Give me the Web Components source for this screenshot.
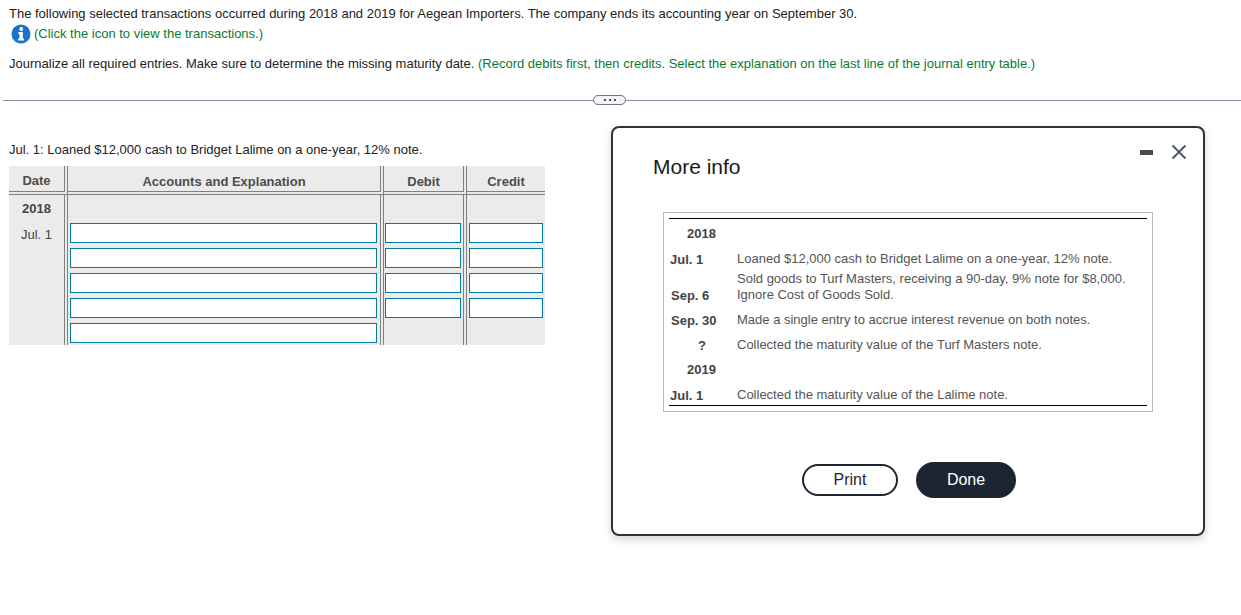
<!DOCTYPE html>
<html>
<head>
<meta charset="utf-8">
<title>Journal entry</title>
<style>
  html, body { margin: 0; height: 100%; background: #fff; }
  body { font: 13px "Liberation Sans", Arial, sans-serif; color: #222; overflow: hidden; }
</style>
</head>
<body>
<question-text></question-text>
<pane-divider></pane-divider>
<journal-table></journal-table>
<more-info-dialog></more-info-dialog>

<script>
class QuestionText extends HTMLElement {
  constructor() {
    super();
    this.attachShadow({ mode: 'open' });
    this.shadowRoot.innerHTML = `
      <style>
        :host { display: block; padding: 6px 0 0 9px; font-size: 13px; line-height: 16px; color: #222; }
        .hint { color: #0a7a2f; }
        .icon-line { display: flex; align-items: center; gap: 3px; margin: 2px 0 0 2px; height: 19px; }
        .task { margin-top: 13px; }
        svg { display: block; flex: none; }
      </style>
      <div class="intro">The following selected transactions occurred during 2018 and 2019 for Aegean Importers. The company ends its accounting year on September 30.</div>
      <div class="icon-line">
        <svg width="20" height="20" viewBox="0 0 20 20">
          <circle cx="10" cy="10" r="9.5" fill="#1a73c9"/>
          <circle cx="10.2" cy="5" r="1.9" fill="#fff"/>
          <path d="M7.4 8h4.4v6.6h1.2v1.9H7.2v-1.9h1.3V9.9H7.4z" fill="#fff"/>
        </svg>
        <span class="hint">(Click the icon to view the transactions.)</span>
      </div>
      <div class="task">Journalize all required entries. Make sure to determine the missing maturity date. <span class="hint">(Record debits first, then credits. Select the explanation on the last line of the journal entry table.)</span></div>
    `;
  }
}

class PaneDivider extends HTMLElement {
  constructor() {
    super();
    this.attachShadow({ mode: 'open' });
    this.shadowRoot.innerHTML = `
      <style>
        :host { display: block; position: relative; height: 1px; margin: 28px 0 0 3px; background: #8a8fa3; }
        .grip {
          position: absolute; left: 590px; top: -5px; width: 33px; height: 10px; box-sizing: border-box;
          border: 1px solid #6d7486; border-radius: 5px; background: #f2f4f7;
          display: flex; align-items: center; justify-content: center; gap: 3px;
        }
        .grip i { width: 2px; height: 2px; background: #4a5060; }
      </style>
      <div class="grip"><i></i><i></i><i></i></div>
    `;
  }
}

class JournalTable extends HTMLElement {
  constructor() {
    super();
    this.attachShadow({ mode: 'open' });

    // rows of the table: date label, then which inputs the row has
    const rows = [
      { date: 'Jul. 1', money: true },
      { date: '', money: true },
      { date: '', money: true },
      { date: '', money: true },
      { date: '', money: false }
    ];
    const body = rows.map((r) => `
      <div class="cell date">${r.date}</div>
      <div class="cell acct"><input type="text"></div>
      <div class="cell num">${r.money ? '<input type="text">' : ''}</div>
      <div class="cell num last">${r.money ? '<input type="text">' : ''}</div>
    `).join('');

    this.shadowRoot.innerHTML = `
      <style>
        :host { display: block; margin: 41px 0 0 9px; width: 536px; color: #444; }
        .prompt { line-height: 16px; color: #222; margin-bottom: 8px; }
        .grid {
          display: grid; grid-template-columns: 59px 316px 83px 78px;
          grid-template-rows: 29px 25px repeat(5, 25px); background: #ebebeb;
        }
        .cell { box-sizing: border-box; border-right: 4px double #808080; }
        .cell.last { border-right: 0; }
        .head {
          border-bottom: 4px double #808080; font-weight: bold; text-align: center;
          line-height: 31px; color: #4d4d4d;
        }
        .head.first { line-height: 29px; }
        .year { font-weight: bold; line-height: 28px; text-align: center; }
        .date { text-align: center; line-height: 30px; }
        .year.date { line-height: 28px; }
        .acct input { width: 307px; margin-left: 2px; }
        .num input { width: 76px; margin-left: 1px; }
        .last input { width: 74px; margin-left: 2px; }
        input {
          display: block; box-sizing: border-box; height: 20px; margin: 3px 0 0; padding: 0;
          border: 1px solid #007a9e; border-radius: 0; background: #fff; outline: 0;
        }
      </style>
      <div class="prompt">Jul. 1: Loaned $12,000 cash to Bridget Lalime on a one-year, 12% note.</div>
      <div class="grid">
        <div class="cell head first">Date</div>
        <div class="cell head">Accounts and Explanation</div>
        <div class="cell head">Debit</div>
        <div class="cell head last">Credit</div>
        <div class="cell year date">2018</div>
        <div class="cell"></div>
        <div class="cell"></div>
        <div class="cell last"></div>
        ${body}
      </div>
    `;
  }
}

class InfoRow extends HTMLElement {
  constructor() {
    super();
    this.attachShadow({ mode: 'open' });
    this.shadowRoot.innerHTML = `
      <style>
        :host { display: grid; grid-template-columns: 67px 1fr; align-items: end; padding: 0 0 4px; line-height: 16px; }
        .when { font-weight: bold; color: #444; margin-bottom: -1px; }
        .what { color: #555; }
      </style>
      <div class="when"><slot name="when"></slot></div>
      <div class="what"><slot></slot></div>
    `;
  }
}

class PillButton extends HTMLElement {
  constructor() {
    super();
    this.attachShadow({ mode: 'open' });
    this.shadowRoot.innerHTML = `
      <style>
        :host {
          display: flex; align-items: center; justify-content: center; box-sizing: border-box;
          width: 96px; height: 32px; border: 2px solid #1e2532; border-radius: 16px;
          font-size: 16px; color: #1e2532; background: #fff;
        }
        :host([primary]) { width: 100px; height: 36px; border-radius: 18px; background: #1e2532; color: #fff; }
      </style>
      <slot></slot>
    `;
  }
}

class MoreInfoDialog extends HTMLElement {
  constructor() {
    super();
    this.attachShadow({ mode: 'open' });
    this.shadowRoot.innerHTML = `
      <style>
        :host {
          position: absolute; left: 611px; top: 126px; width: 594px; height: 410px; box-sizing: border-box;
          display: block; border: 2px solid #333; border-radius: 8px; background: #fff;
          box-shadow: 0 4px 10px rgba(0,0,0,.16); padding: 26px 0 0 40px;
        }
        h2 { margin: 0; font-size: 21px; font-weight: normal; line-height: 26px; color: #1a1a1a; }
        .tools { position: absolute; right: 16px; top: 16px; display: flex; align-items: center; gap: 17px; }
        .tools svg { display: block; }
        .box {
          width: 490px; height: 200px; box-sizing: border-box; margin: 32px 0 0 10px; padding: 5px 5px 0;
          border: 1px solid #bbb;
        }
        .rules { border-top: 1px solid #000; border-bottom: 1px solid #000; height: 188px; padding: 7px 0 0 1px; box-sizing: border-box; }
        .actions { display: flex; justify-content: center; align-items: center; gap: 18px; margin: 50px 0 0 -38px; }
      </style>
      <div class="tools">
        <svg width="14" height="14" viewBox="0 0 14 14"><rect x="0" y="5" width="13" height="5" fill="#4a4a4a"/></svg>
        <svg width="16" height="16" viewBox="0 0 16 16"><path d="M1.5 1.5l13 13M14.5 1.5l-13 13" stroke="#47566a" stroke-width="1.8" fill="none"/></svg>
      </div>
      <h2>More info</h2>
      <div class="box">
        <div class="rules">
          <info-row><span slot="when" style="padding-left:17px">2018</span></info-row>
          <info-row style="padding-top:6px"><span slot="when">Jul. 1</span>Loaned $12,000 cash to Bridget Lalime on a one-year, 12% note.</info-row>
          <info-row style="padding-top:0"><span slot="when" style="padding-left:1px">Sep. 6</span>Sold goods to Turf Masters, receiving a 90-day, 9% note for $8,000.<br>Ignore Cost of Goods Sold.</info-row>
          <info-row style="padding-top:5px"><span slot="when" style="padding-left:1px">Sep. 30</span>Made a single entry to accrue interest revenue on both notes.</info-row>
          <info-row style="padding-top:5px"><span slot="when" style="padding-left:28px">?</span>Collected the maturity value of the Turf Masters note.</info-row>
          <info-row style="padding-top:5px"><span slot="when" style="padding-left:17px">2019</span></info-row>
          <info-row style="padding-top:6px"><span slot="when">Jul. 1</span>Collected the maturity value of the Lalime note.</info-row>
        </div>
      </div>
      <div class="actions">
        <pill-button>Print</pill-button>
        <pill-button primary>Done</pill-button>
      </div>
    `;
  }
}

customElements.define('question-text', QuestionText);
customElements.define('pane-divider', PaneDivider);
customElements.define('journal-table', JournalTable);
customElements.define('info-row', InfoRow);
customElements.define('pill-button', PillButton);
customElements.define('more-info-dialog', MoreInfoDialog);
</script>
</body>
</html>
